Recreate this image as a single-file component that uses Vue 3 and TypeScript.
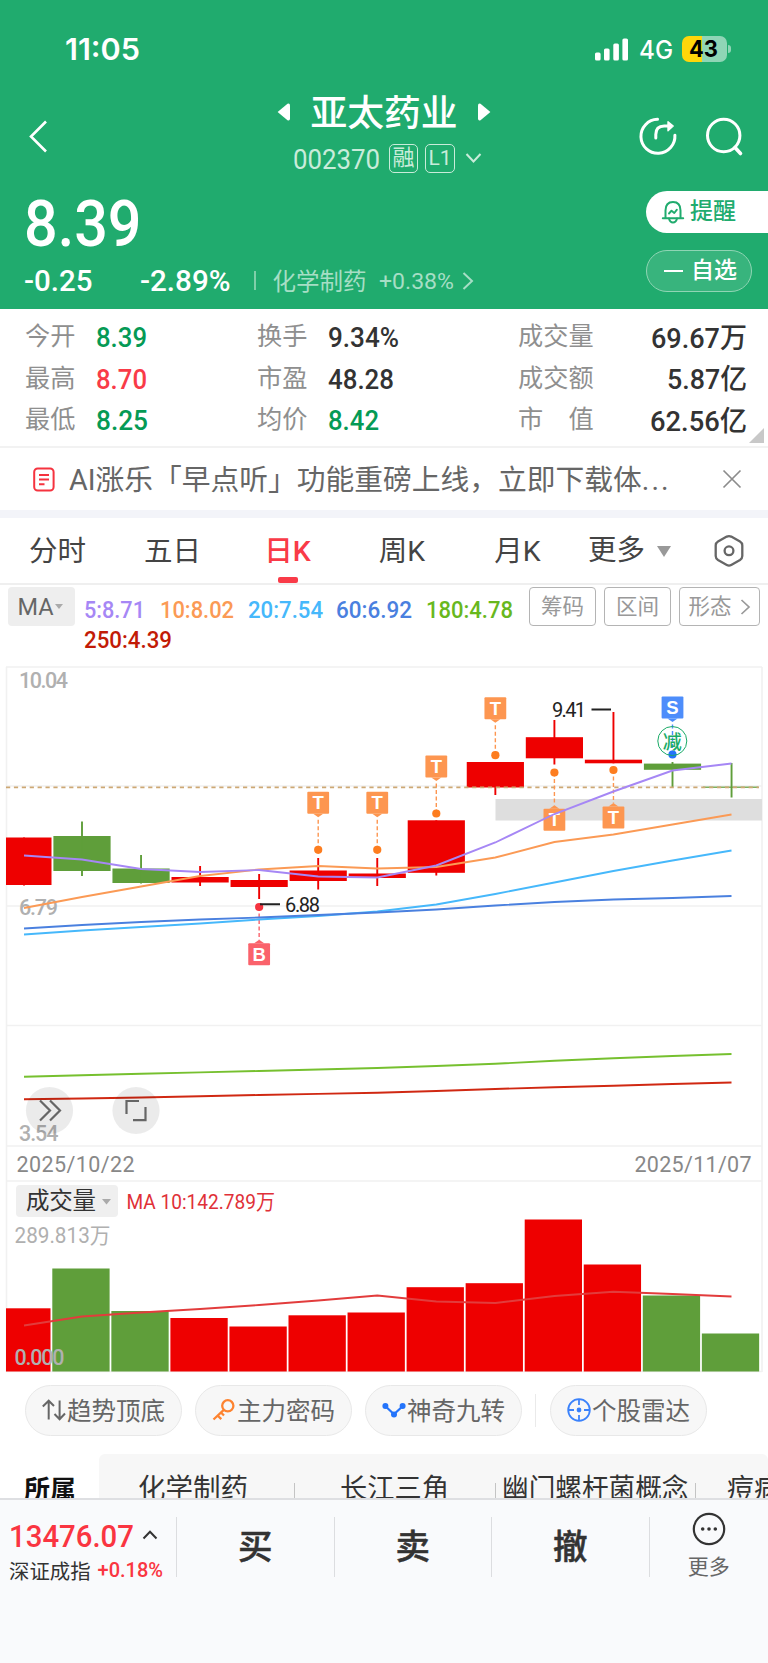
<script setup lang="ts">
import type { Directive } from 'vue'

// Condenses a run of text horizontally so that it takes exactly the given width.
const vFit: Directive<HTMLElement, number> = {
  mounted(el, { value }) {
    const natural = el.getBoundingClientRect().width
    if (!natural) return
    el.style.transform = `scaleX(${value / natural})`
    el.style.marginRight = `${value - natural}px`
  },
}

interface Quote { label: string; value: string; tone: string; w: number }
const quotes: { name: string; rows: Quote[] }[] = [
  {
    name: 'prices',
    rows: [
      { label: '今开', value: '8.39', tone: 'green', w: 51 },
      { label: '最高', value: '8.70', tone: 'red', w: 51 },
      { label: '最低', value: '8.25', tone: 'green', w: 52 },
    ],
  },
  {
    name: 'ratios',
    rows: [
      { label: '换手', value: '9.34%', tone: 'dark', w: 71 },
      { label: '市盈', value: '48.28', tone: 'dark', w: 66 },
      { label: '均价', value: '8.42', tone: 'green', w: 51 },
    ],
  },
  {
    name: 'totals',
    rows: [
      { label: '成交量', value: '69.67万', tone: 'dark', w: 96 },
      { label: '成交额', value: '5.87亿', tone: 'dark', w: 80 },
      { label: '市　值', value: '62.56亿', tone: 'dark', w: 97 },
    ],
  },
]

const tabs = [
  { text: '分时', w: 115 },
  { text: '五日', w: 115 },
  { text: '日K', w: 115, active: true },
  { text: '周K', w: 114 },
  { text: '月K', w: 117 },
]

const averages = [
  { text: '5:8.71', color: '#a687f5', w: 61, gap: 15 },
  { text: '10:8.02', color: '#fb9a55', w: 74, gap: 13.5 },
  { text: '20:7.54', color: '#46b8fb', w: 75, gap: 13.5 },
  { text: '60:6.92', color: '#4a80df', w: 76, gap: 13.5 },
  { text: '180:4.78', color: '#68b81d', w: 87, gap: 10 },
  { text: '250:4.39', color: '#c21b06', w: 88, gap: 0 },
]

const RED = '#ee0000'
const GREEN = '#5f9e3a'
const STEP = 59.05
const centre = (i: number) => (i === 0 ? 24 : 82 + STEP * (i - 1))

// Each entry: body top, body bottom, wick top, wick bottom, up/down.
const candles = [
  [837.5, 885, 837.5, 885.5, 1],
  [836, 871, 821.5, 876, 0],
  [868.5, 883, 855, 883.5, 0],
  [877, 882.5, 866, 886, 1],
  [880, 887, 874, 899, 1],
  [870.5, 881, 858, 889.5, 1],
  [873.5, 878, 858, 886, 1],
  [820.3, 872.8, 820.3, 875.5, 1],
  [762, 787.5, 762, 795, 1],
  [737.2, 758.3, 720, 764.5, 1],
  [759.7, 763.3, 712, 763.3, 1],
  [763.6, 769.8, 762, 787, 0],
  [786.6, 787.8, 763, 797.5, 0],
].map(([top, bottom, high, low, up], i) => ({
  x: i === 0 ? 6 : centre(i) - 28.6,
  w: i === 0 ? 45.5 : i === 12 ? 55.5 : 57.2,
  cx: centre(i),
  top, bottom, high, low,
  color: up ? RED : GREEN,
}))

const bars = [1308.3, 1268.5, 1311, 1318, 1326.5, 1315.3, 1312.5, 1287.2, 1283.2, 1219.5, 1264.5, 1295.5, 1333.5].map(
  (top, i) => ({
    x: i === 0 ? 6 : 52.3 + STEP * (i - 1),
    w: i === 0 ? 44.5 : 57.3,
    top,
    color: [1, 2, 11, 12].includes(i) ? GREEN : RED,
  }),
)

const line = (ys: number[]) => ys.map((y, i) => `${centre(i).toFixed(1)},${y}`).join(' ')
const lines = [
  { color: '#46b8fb', points: line([934.5, 930.5, 927, 923.5, 919.5, 916, 911.5, 904.5, 894, 882.5, 871, 860.5, 850.5]) },
  { color: '#4a80df', points: line([928.5, 925, 922, 919.5, 917.5, 915, 912.5, 909.5, 905.5, 902, 899.5, 898, 896]) },
  { color: '#fb9a55', points: line([908, 897, 886.5, 876, 869.5, 866, 868.5, 867, 857.5, 842, 834.5, 824.5, 814.5]) },
  { color: '#a687f5', points: line([855.5, 859.5, 869, 872, 870, 876.5, 877.5, 865.5, 842.5, 814, 791.5, 770.5, 763.5]) },
  { color: '#76c02f', points: line([1076.7, 1075.2, 1073.8, 1072.4, 1071, 1069.5, 1068, 1066, 1063.7, 1060.8, 1058.2, 1056, 1054]) },
  { color: '#d02812', points: line([1099.3, 1098.5, 1097.5, 1096.3, 1095, 1093.9, 1092.7, 1091, 1089, 1087.2, 1085.7, 1084, 1082.5]) },
]
const volumeLine = line([1325.5, 1316.5, 1312.5, 1309, 1305, 1300.5, 1295.5, 1301.5, 1303, 1296, 1291.7, 1294, 1296.5])

const orange = { tagColor: '#fd9650', dotColor: '#fd7d1f' }
// y is the top of the tag, dot the centre of the point that it refers to.
const markers = [
  { i: 5, y: 791.7, dot: 849.8, text: 'T', ...orange },
  { i: 6, y: 791.7, dot: 849.8, text: 'T', ...orange },
  { i: 7, y: 755.5, dot: 813.5, text: 'T', ...orange },
  { i: 8, y: 697.3, dot: 755.2, text: 'T', ...orange },
  { i: 9, y: 808.8, dot: 772.5, text: 'T', ...orange },
  { i: 10, y: 806.5, dot: 770, text: 'T', ...orange },
  { i: 4, y: 943.3, dot: 907, text: 'B', tagColor: '#fa626b', dotColor: '#f5333f' },
  { i: 11, y: 696.6, dot: 754.5, text: 'S', tagColor: '#4d8dfb', dotColor: '#2474fb' },
].map((m) => {
  const x = centre(m.i)
  const below = m.y > m.dot
  const base = below ? m.y : m.y + 22
  const tip = below ? base - 3.5 : base + 3.5
  return { ...m, x, base, tip, pointer: `${x - 5},${base} ${x},${tip} ${x + 5},${base}` }
})

const concepts = [
  { text: '化学制药', pad: 39, w: 110, after: 46.5 },
  { text: '长江三角', pad: 45, w: 109, after: 47 },
  { text: '幽门螺杆菌概念', pad: 6, w: 186.5, after: 8 },
  { text: '痘病毒', pad: 31, w: 81, after: 20 },
]
</script>

<template>
  <div class="page">
    <header class="hero">
      <div class="status">
        <span v-fit="75" class="fit clock">11:05</span>
        <svg class="signal" width="36" height="24" viewBox="0 0 36 24" fill="#fff">
          <rect x="1" y="14.5" width="5.6" height="8" rx="1.6" />
          <rect x="10" y="10.5" width="5.6" height="12" rx="1.6" />
          <rect x="19.3" y="5.5" width="5.6" height="17" rx="1.6" />
          <rect x="28.4" y="0.5" width="5.6" height="22" rx="1.6" />
        </svg>
        <span v-fit="34" class="fit net">4G</span>
        <span class="battery"><b v-fit="29" class="fit">43</b></span>
        <i class="nub"></i>
      </div>

      <div class="titlebar">
        <svg class="back" width="20" height="36" viewBox="0 0 20 36" fill="none" stroke="#fff" stroke-width="2.6">
          <path d="M18 2.5 3 17.5 18 32.5" />
        </svg>
        <div class="title">
          <div class="name">
            <svg width="14" height="18" viewBox="0 0 14 18" fill="#fff"><path d="M0.6 9 10.5 0.8Q13 0 13 2.6V15.4Q13 18 10.5 17.2Z" /></svg>
            <h1>亚太药业</h1>
            <svg width="14" height="18" viewBox="0 0 14 18" fill="#fff"><path d="M13.4 9 3.5 0.8Q1 0 1 2.6V15.4Q1 18 3.5 17.2Z" /></svg>
          </div>
          <div class="code">
            <span v-fit="87" class="fit digits">002370</span>
            <span class="chip">融</span>
            <span class="chip l1">L1</span>
            <svg width="17" height="12" viewBox="0 0 17 12" fill="none" stroke="#c9ecda" stroke-width="2"><path d="M1.5 2 8.5 9.5 15.5 2" /></svg>
          </div>
        </div>
        <svg class="tools" width="108" height="42" viewBox="0 0 108 42" fill="none" stroke="#fff" stroke-width="3" stroke-linecap="round">
          <path d="M20.5 3.3A17 17 0 1 0 37.9 19.2" />
          <path d="M18.8 22v-3.5q0-8.6 8.4-8.6h6.5" />
          <path d="M31 5.8l5.2 4.2-5.2 4.8z" fill="#fff" stroke-width="1.4" stroke-linejoin="round" />
          <circle cx="86.7" cy="19.5" r="16.2" />
          <path d="M98 31.5l5.5 6" stroke-width="3.6" />
        </svg>
      </div>

      <div class="pricebar">
        <div class="pricing">
          <div v-fit="117.5" class="fit price">8.39</div>
          <div class="delta">
            <span v-fit="68.5" class="fit">-0.25</span>
            <span v-fit="90.5" class="fit pct">-2.89%</span>
            <i class="sep"></i>
            <span class="sector">化学制药</span>
            <span v-fit="75" class="fit sectorpct">+0.38%</span>
            <svg width="12" height="20" viewBox="0 0 12 20" fill="none" stroke="#a6dec5" stroke-width="2"><path d="M1.5 2 10 10 1.5 18" /></svg>
          </div>
        </div>
        <div class="actions">
          <button class="remind">
            <svg width="24" height="24" viewBox="0 0 24 24" fill="none" stroke="#20ab6e" stroke-width="2" stroke-linecap="round" stroke-linejoin="round">
              <path d="M4.5 18V10.5Q4.5 2 12 2T19.500 10.5V18M1.800 18.200H22.200" />
              <path d="M8 18.500q1 4 4 4t4-4" />
              <path d="M8 13.500l2.500-2.800 2.800 2.300 2.600-3.300" stroke-width="1.900" />
            </svg>
            <span>提醒</span>
          </button>
          <button class="watch"><i></i><span>自选</span></button>
        </div>
      </div>
    </header>

    <section class="quotes">
      <div v-for="group in quotes" :key="group.name" :class="['group', group.name]">
        <div v-for="q in group.rows" :key="q.label" class="quote">
          <span class="label">{{ q.label }}</span>
          <span v-fit="q.w" :class="['fit', 'value', q.tone]">{{ q.value }}</span>
        </div>
      </div>
      <i class="corner"></i>
    </section>

    <section class="notice">
      <svg width="22" height="25" viewBox="0 0 22 25" fill="none" stroke="#f5333f" stroke-width="2">
        <rect x="1.200" y="1.500" width="19.400" height="22" rx="3.500" />
        <path d="M6 8h10M6 12.600h10M6 17.200h5.500" />
      </svg>
      <p>AI涨乐「早点听」功能重磅上线，立即下载体<span>...</span></p>
      <svg width="20" height="20" viewBox="0 0 20 20" fill="none" stroke="#8c8c8c" stroke-width="1.700"><path d="M1.500 1.500l17 17M18.500 1.500l-17 17" /></svg>
    </section>

    <nav class="tabs">
      <span v-for="t in tabs" :key="t.text" :class="{ active: t.active }" :style="{ width: t.w + 'px' }">{{ t.text }}</span>
      <span class="more">更多<i></i></span>
      <svg width="32" height="34" viewBox="0 0 32 34" fill="none" stroke="#666" stroke-width="2.300" stroke-linejoin="round">
        <path d="M13.800 2.600Q16 1.500 18.200 2.600L27 7.600Q29.300 9 29.300 11.500V22Q29.300 24.500 27 26L18.200 31Q16 32.200 13.800 31L5 26Q2.700 24.500 2.700 22V11.500Q2.700 9 5 7.600Z" />
        <circle cx="16" cy="16.800" r="4.400" />
      </svg>
    </nav>

    <section class="indicators">
      <span class="pick ma">MA<i></i></span>
      <div class="averages">
        <span v-for="a in averages" :key="a.text" class="average" :style="{ color: a.color, width: a.w + a.gap + 'px' }"><b v-fit="a.w" class="fit">{{ a.text }}</b></span>
      </div>
      <button>筹码</button>
      <button>区间</button>
      <button class="shape">形态<svg width="11" height="18" viewBox="0 0 11 18" fill="none" stroke="#999" stroke-width="1.700"><path d="M1.500 2 9 9 1.500 16" /></svg></button>
    </section>

    <svg class="chart" width="768" height="712" viewBox="0 664 768 712">
      <g stroke="#f1f1f1" stroke-width="1.600" fill="none">
        <path d="M6.500 667V1372M762 667V1372M6 667H762M6 786H762M6 906H762M6 1025.500H762M6 1146H762M6 1181H762M6 1371.500H762" />
      </g>

      <rect x="495.500" y="799" width="266.500" height="21.500" fill="#dedede" />
      <g class="axis">
        <text x="19" y="688" textLength="49">10.04</text>
        <text x="19" y="914.500" textLength="39">6.79</text>
        <text x="19" y="1141" textLength="39.500">3.54</text>
      </g>

      <g v-for="(c, i) in candles" :key="i" :fill="c.color">
        <rect :x="c.x" :y="c.top" :width="c.w" :height="c.bottom - c.top" />
        <rect :x="c.cx - 0.950" :y="c.high" width="1.900" :height="c.low - c.high" />
      </g>
      <path d="M6 787.300H759" stroke="#cda874" stroke-width="1.700" stroke-dasharray="4.200 3.700" />
      <g v-for="m in markers" :key="m.i" class="marker">
        <path :d="`M${m.x} ${m.dot}V${m.tip}`" :stroke="m.tagColor" stroke-width="1.400" stroke-dasharray="4 2.500" />
        <circle :cx="m.x" :cy="m.dot" r="4.100" :fill="m.dotColor" />
        <g :fill="m.tagColor">
          <rect :x="m.x - 10.900" :y="m.y" width="21.800" height="22" rx="1" />
          <polygon :points="m.pointer" />
        </g>
        <text :x="m.x" :y="m.y + 17.200">{{ m.text }}</text>
      </g>
      <circle cx="672.300" cy="741" r="14.500" fill="none" stroke="#1aab67" stroke-width="1" />
      <text class="cut" x="672.300" y="748.500">减</text>

      <polyline v-for="l in lines" :key="l.color" :points="l.points" fill="none" :stroke="l.color" stroke-width="1.900" />

      <path d="M260 904.300H280M591.500 709.500H611" stroke="#222" stroke-width="2" />
      <g class="peak">
        <text x="285" y="912" textLength="35">6.88</text>
        <text x="552" y="717" textLength="34">9.41</text>
      </g>

      <g fill="#000" fill-opacity="0.08">
        <circle cx="49.500" cy="1110.500" r="23.600" />
        <circle cx="136" cy="1110.500" r="23.600" />
      </g>
      <path d="M40 1100.500 50 1110.500 40 1120.500M50 1100.500 60 1110.500 50 1120.500M126.500 1114V1101H139M145.500 1107V1120.200H133" fill="none" stroke="#666" stroke-width="2.200" />

      <g class="dates">
        <text x="16.500" y="1172" textLength="118">2025/10/22</text>
        <text x="634.500" y="1172" textLength="117">2025/11/07</text>
      </g>

      <rect x="16" y="1185" width="102" height="32" rx="4" fill="#efefef" />
      <path d="M102 1199H111L106.500 1204.500Z" fill="#aaa" />
      <text class="volname" x="26" y="1209" textLength="70">成交量</text>
      <text class="volma" x="126.500" y="1209" textLength="148.500" lengthAdjust="spacingAndGlyphs">MA 10:142.789万</text>
      <g class="axis thin">
        <text x="14.500" y="1243" textLength="96" lengthAdjust="spacingAndGlyphs">289.813万</text>
      </g>

      <rect v-for="(b, i) in bars" :key="i" :x="b.x" :y="b.top" :width="b.w" :height="1371.500 - b.top" :fill="b.color" />
      <polyline :points="volumeLine" fill="none" stroke="#e23c3c" stroke-width="1.900" />
      <g class="axis">
        <text x="14.500" y="1364.500" textLength="50">0.000</text>
      </g>
    </svg>

    <section class="pills">
      <button>
        <svg width="24" height="24" viewBox="0 0 24 24" fill="none" stroke="#666" stroke-width="2"><path d="M6.700 21.500V3M0.800 8.500 6.700 2.700 12 8M17.600 2.500V21M12.500 16 17.600 21.300 23 15.500" /></svg><span>趋势顶底</span>
      </button>
      <button>
        <svg width="24" height="24" viewBox="0 0 24 24" fill="none" stroke="#fd8330" stroke-width="2.300"><circle cx="15.800" cy="7.800" r="5.600" /><path d="M11.800 11.800 1.500 21.500M5.500 17.500l3.800 3.600M9 14.500l3 3" /></svg><span>主力密码</span>
      </button>
      <button>
        <svg width="24" height="24" viewBox="0 0 24 24" fill="#2474fb"><path d="M3.200 8 12 16.300 20.800 8" fill="none" stroke="#2474fb" stroke-width="2.200" /><circle cx="3.400" cy="8" r="3" /><circle cx="12" cy="16.500" r="3" /><circle cx="20.600" cy="8" r="3" /></svg><span>神奇九转</span>
      </button>
      <i></i>
      <button>
        <svg width="24" height="24" viewBox="0 0 24 24" fill="none" stroke="#3b82fb" stroke-width="1.800"><circle cx="12" cy="12" r="10.800" /><path d="M12 1.500v5.500M12 17v5.500M1.500 12h5.500M17 12h5.500" /><circle cx="12" cy="12" r="1.500" fill="#2474fb" /></svg><span>个股雷达</span>
      </button>
    </section>

    <section class="concepts">
      <h2>所属</h2>
      <div class="strip">
        <span v-for="c in concepts" :key="c.text" :style="{ paddingLeft: c.pad + 'px', paddingRight: c.after + 'px' }"><em v-fit="c.w" class="fit">{{ c.text }}</em></span>
      </div>
    </section>

    <footer class="dock">
      <div class="index">
        <div class="points"><span v-fit="125" class="fit">13476.07</span><svg width="16" height="10" viewBox="0 0 16 10" fill="none" stroke="#333" stroke-width="2"><path d="M1.500 8.500 8 1.800 14.500 8.500" /></svg></div>
        <div class="shift"><span>深证成指</span><span v-fit="65.5" class="fit rise">+0.18%</span></div>
      </div>
      <button>买</button>
      <button>卖</button>
      <button>撤</button>
      <div class="extra">
        <svg width="34" height="34" viewBox="0 0 34 34" fill="#333"><circle cx="17" cy="17" r="15.200" fill="none" stroke="#333" stroke-width="2.200" /><circle cx="10.700" cy="17" r="1.800" /><circle cx="17" cy="17" r="1.800" /><circle cx="23.300" cy="17" r="1.800" /></svg>
        <span>更多</span>
      </div>
    </footer>
  </div>
</template>

<style>
html, body { margin: 0; background: #fff; overflow: hidden; }
</style>

<style scoped>
* { box-sizing: border-box; }
.page {
  width: 768px; height: 1663px; overflow: hidden; display: flex; flex-direction: column;
  background: #fff; color: #333;
  font-family: Roboto, "Noto Sans CJK SC", sans-serif;
}
.page > * { flex: none; }
h1, h2, p { margin: 0; }
svg { display: block; flex: none; }
button { border: 0; margin: 0; padding: 0; background: none; color: inherit; font: inherit; }
.fit { display: inline-block; transform-origin: 0 50%; white-space: nowrap; flex: none; }

.hero { height: 309px; background: #20ab6e; color: #fff; }
.status { height: 82px; padding: 17px 0 0 64.500px; display: flex; align-items: center; font-family: Inter, sans-serif; }
.clock { font-size: 30px; font-weight: 600; margin-top: -2px; }
.signal { margin-left: 454px; }
.net { font-size: 25px; font-weight: 500; margin-left: 9px; }
.battery {
  width: 45px; height: 26px; margin: -1px 0 0 9px; border-radius: 7px; display: flex; align-items: center; padding-left: 7px;
  background: linear-gradient(90deg, #ffd60a 20px, #8fd5b6 20px); color: #000; font-size: 23.500px; line-height: 26px;
}
.nub { width: 3px; height: 8px; margin: -1px 0 0 1px; border-radius: 0 3px 3px 0; background: #8fd5b6; }

.titlebar { height: 98px; display: flex; align-items: flex-start; }
.back { margin: 37px 0 0 28px; }
.title { width: 215px; margin-left: 229px; }
.name { height: 60px; display: flex; align-items: center; }
.name h1 { width: 186px; text-align: center; font-size: 36.8px; line-height: 60px; font-weight: 500; padding-top: 3px; }
.code { height: 30px; display: flex; align-items: center; color: #c9ecda; margin: 1px 0 0 16px; }
.digits { font-size: 28px; margin-top: 2px; }
.chip {
  width: 29px; height: 29px; margin-left: 9px; border: 1.500px solid #c9ecda; border-radius: 5px;
  font-size: 22px; line-height: 26px; display: flex; justify-content: center;
}
.l1 { font-size: 21px; margin: 0 10px 0 7px; width: 30px; }
.tools { margin: 34px 0 0 144.500px; }

.pricebar { display: flex; justify-content: space-between; }
.pricing { padding-left: 24px; }
.price { font-size: 64px; line-height: 64px; font-weight: 500; margin-top: 13px; }
.delta { display: flex; align-items: center; height: 36px; margin-top: 6px; font-size: 29px; font-weight: 500; }
.pct { position: relative; left: 47.500px; }
.sep { width: 1.500px; height: 19px; background: #7fcfa9; margin: -1px 17px 0 71px; }
.sector { font-size: 23.500px; color: #a6dec5; font-weight: 400; width: 106px; white-space: nowrap; margin-top: -3px; }
.sectorpct { font-size: 22.500px; color: #a6dec5; font-weight: 400; margin-top: -1px; }
.delta svg { margin: -1px 0 0 8px; }
.actions { width: 122px; padding-top: 11px; }
.remind, .watch { display: flex; align-items: center; height: 42px; font-size: 23px; line-height: 42px; font-weight: 500; }
.remind { width: 122px; padding-left: 15px; gap: 5px; border-radius: 21px 0 0 21px; background: #fff; color: #20ab6e; }
.watch { width: 106px; margin-top: 17px; padding-left: 17px; gap: 8px; border-radius: 21px; border: 1px solid #8fd5b4; background: #38b47d; }
.watch i { width: 19px; height: 2px; background: #fff; }

.quotes { height: 139px; display: flex; position: relative; padding-top: 8px; border-bottom: 2px solid #f2f2f2; }
.quote { height: 41.500px; display: flex; align-items: center; font-size: 28px; font-weight: 500; }
.label { font-size: 25.200px; line-height: 40px; color: #8f8f8f; font-weight: 400; margin-top: -1.500px; }
.prices { width: 232px; padding-left: 25px; }
.prices .label, .ratios .label { width: 71px; }
.ratios { width: 286px; padding-left: 25px; }
.totals { width: 228.500px; }
.totals .quote { justify-content: space-between; }
.totals .value { margin-top: -4px; }
.green { color: #059a55; }
.red { color: #f93b48; }
.dark { color: #333; }
.corner { position: absolute; right: 4px; bottom: 3px; border-left: 15px solid transparent; border-bottom: 15px solid #c8c8c8; }

.notice { height: 70px; border-bottom: 8px solid #f3f4f9; display: flex; align-items: center; padding-left: 33px; }
.notice p { width: 638px; margin: 2px 15px 0 14px; font-size: 28.750px; line-height: 62px; color: #666; white-space: nowrap; }
.notice p span { letter-spacing: 2px; }

.tabs { height: 67px; display: flex; align-items: center; border-bottom: 2px solid #efefef; font-size: 28.500px; color: #444; position: relative; }
.tabs > span { height: 65px; line-height: 68px; text-align: center; display: flex; justify-content: center; position: relative; }
.tabs .active { color: #f93b48; font-weight: 500; }
.active::after { content: ""; position: absolute; left: 47.500px; bottom: 0; width: 20px; height: 6px; border-radius: 2px; background: #f93b48; }
.tabs .more { margin-left: 12px; width: 83px; align-items: center; justify-content: space-between; margin-right: 42px; }
.more i { border: 7.500px solid transparent; border-top: 11px solid #999; border-bottom: 0; margin-top: 2px; }

.indicators { height: 79px; display: flex; align-items: flex-start; padding: 2px 0 0 8px; }
.pick { width: 67px; height: 39px; border-radius: 4px; background: #eee; color: #666; display: flex; align-items: center; padding-left: 9.500px; font-size: 23.500px; gap: 1px; }
.pick i { border: 4.500px solid transparent; border-top: 5.500px solid #aaa; border-bottom: 0; }
.averages { width: 445px; margin-left: 9px; padding-top: 8px; display: flex; flex-wrap: wrap; }
.average { height: 30px; line-height: 30px; font-size: 23.500px; }
.average b { font-weight: 500; }
.indicators button { width: 67px; height: 39px; margin-right: 8px; border: 1.500px solid #b4b4b4; border-radius: 4px; color: #999; font-size: 21.500px; line-height: 34px; }
.indicators .shape { width: 81px; margin: 0; display: flex; align-items: center; justify-content: center; gap: 8px; }

.axis text { font-size: 21.500px; font-weight: 500; fill: #b0b0b0; }
.axis.thin text { font-weight: 400; }
.marker text { font-family: "Liberation Sans", sans-serif; font-size: 18.500px; font-weight: 700; fill: #fff; text-anchor: middle; }
.cut { font-size: 19px; font-weight: 500; fill: #1aab67; text-anchor: middle; }
.peak text { font-size: 20px; fill: #222; }
.dates text { font-size: 21.500px; fill: #888; }
.volname { font-size: 23.500px; fill: #333; }
.volma { font-size: 21px; fill: #e03038; }

.pills { height: 78px; display: flex; align-items: flex-start; padding: 9px 0 0 25px; }
.pills button {
  width: 157px; height: 51px; margin-right: 13px; border: 1px solid #e8e8e8; border-radius: 26px; background: #f7f7f7;
  color: #666; font-size: 24.500px; display: flex; align-items: center; justify-content: center; gap: 1px; white-space: nowrap;
}
.pills svg { margin-top: -1px; }
.pills span { margin-top: -3px; }
.pills i { width: 1px; height: 33px; margin: 9px 14px 0 0; background: #eaeaea; }

.concepts { height: 44px; display: flex; overflow: hidden; }
.concepts h2 { width: 75px; margin-left: 24px; font-size: 26px; line-height: 73px; font-weight: 700; color: #111; }
.strip { width: 669px; height: 80px; overflow: hidden; border-radius: 6px; background: #f7f7f7; display: flex; }
.strip span { flex: none; position: relative; line-height: 70px; font-size: 27px; }
.strip em { font-style: normal; }
.strip span:not(:last-child)::after { content: ""; position: absolute; right: 0; top: 29px; width: 1px; height: 30px; background: #c4c4c4; }

.dock { height: 165px; border-top: 2px solid #dedfe2; background: #f9fafc; display: flex; align-items: flex-start; padding-top: 17px; }
.index { width: 176px; padding-left: 9px; height: 60px; }
.points { display: flex; align-items: center; gap: 8px; height: 38px; color: #fa3541; font-size: 31px; font-weight: 500; }
.points svg { margin-top: -2px; }
.shift { display: flex; align-items: center; gap: 7px; height: 32px; font-size: 20.400px; margin-top: -1px; }
.rise { color: #fa3541; font-size: 20px; font-weight: 500; }
.dock button { width: 157.500px; height: 60px; border-left: 1.500px solid #dcdde0; font-size: 34.500px; line-height: 59px; font-weight: 500; -webkit-text-stroke: 0.500px #333; }
.extra { width: 119.500px; height: 60px; border-left: 1.500px solid #dcdde0; display: flex; flex-direction: column; align-items: center; color: #666; font-size: 21px; }
.extra svg { margin-top: -5px; }
.extra span { line-height: 32px; margin-top: 5px; }
</style>
